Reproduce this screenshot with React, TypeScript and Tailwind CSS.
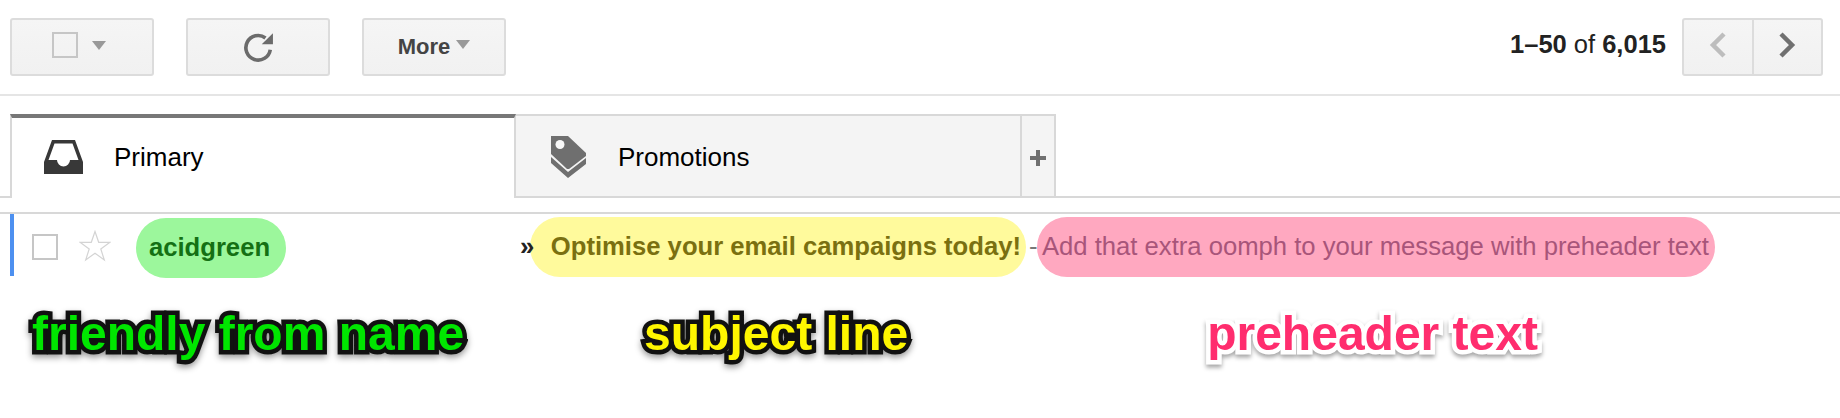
const Caret = () => (
  <svg width="14" height="9" viewBox="0 0 14 9"><path d="M0 0h14L7 9z" fill="#999" /></svg>
);

const btn = "w-[144px] h-[58px] rounded-[3px] border-2 border-[#dcdcdc] bg-gradient-to-b from-[#f5f5f5] to-[#f1f1f1] flex items-center justify-center";

export default function App() {
  return (
    <div className="w-[1840px] h-[418px] overflow-hidden bg-white [font-family:'Liberation_Sans',Arial,sans-serif] text-[25.5px] leading-none">
      <header className="h-[96px] pt-[18px] pl-[10px] pr-[17px] flex items-start gap-[32px] border-b-2 border-[#e5e5e5]">
        <div className={`${btn} gap-[14px] pr-[6px] pb-[4px]`}>
          <span className="w-[26px] h-[26px] border-2 border-[#c6c6c6]" />
          <Caret />
        </div>
        <div className={btn}>
          <svg width="32" height="32" viewBox="0 0 30 30" fill="none">
            <path d="M26.500 17.500a11.500 11.500 0 1 1-4.500-11" stroke="#6b6b6b" strokeWidth="3.400" />
            <path d="M18.500 12.500H29V2z" fill="#6b6b6b" />
          </svg>
        </div>
        <div className={`${btn} gap-[6px]`}>
          <span className="font-bold text-[22px] text-[#444]">More</span>
          <span className="pb-[6px] flex"><Caret /></span>
        </div>
        <div className="ml-auto flex items-center gap-[16px]">
          <span className="text-[#222] pb-[4px]"><b>1–50</b> of <b>6,015</b></span>
          <div className="w-[141px] h-[58px] rounded-[3px] border-2 border-[#dcdcdc] bg-gradient-to-b from-[#f5f5f5] to-[#f1f1f1] flex">
            <div className="flex-1 flex items-center justify-center border-r-2 border-[#dcdcdc] pb-[4px]">
              <svg width="18" height="28" viewBox="0 0 18 28" fill="none"><path d="M15 3 4 14l11 11" stroke="#bdbdbd" strokeWidth="4.500" /></svg>
            </div>
            <div className="flex-1 flex items-center justify-center pb-[4px]">
              <svg width="18" height="28" viewBox="0 0 18 28" fill="none"><path d="M3 3l11 11L3 25" stroke="#707070" strokeWidth="4.500" /></svg>
            </div>
          </div>
        </div>
      </header>

      <nav className="mt-[18px] pl-[10px] flex items-start h-[84px] text-black text-[26px] border-b-2 border-[#d8d8d8]">
        <div className="w-[506px] h-[84px] border-t-4 border-t-[#777] border-x-2 border-x-[#d8d8d8] flex items-center pl-[32px] gap-[31px] pb-[2px] bg-white">
          <svg width="39" height="34" viewBox="0 0 39 34">
            <path fillRule="evenodd" fill="#383838" d="M8 0h23l8 22v12H0V22zM10.500 3.500 4.500 20H13a6.500 6.500 0 0 0 13 0h8.500L28.500 3.500z" />
          </svg>
          <span>Primary</span>
        </div>
        <div className="w-[506px] h-[82px] border-t-2 border-r-2 border-[#d8d8d8] bg-[#f4f4f4] flex items-center pl-[35px] gap-[32px] pt-[2px]">
          <svg width="35" height="42" viewBox="0 0 35 42">
            <path fill="#6f6f6f" d="M0 0h17l18 17v3L18 33h-2L0 18z" />
            <circle cx="9" cy="8.500" r="4.500" fill="#f8f8f8" />
            <path fill="#6f6f6f" d="M0 21 17 36 35 22v6L17 42 0 27z" />
          </svg>
          <span>Promotions</span>
        </div>
        <div className="w-[34px] h-[82px] border-t-2 border-r-2 border-[#d8d8d8] bg-[#f4f4f4] flex items-center justify-center pt-[4px]">
          <svg width="16" height="16" viewBox="0 0 16 16"><path d="M6 0h4v6h6v4h-6v6H6v-6H0V6h6z" fill="#707070" /></svg>
        </div>
      </nav>

      <section className="mt-[14px] border-t-2 border-[#d8d8d8] pl-[10px] h-[66px] flex items-start text-[25.65px]">
        <div className="w-[4px] h-[62px] bg-[#4d90f0] mr-[18px]" />
        <span className="w-[26px] h-[26px] mt-[20px] border-2 border-[#c6c6c6] mr-[21px]" />
        <svg className="mt-[16px] mr-[25px]" width="32" height="32" viewBox="0 0 32 32" fill="none">
          <path d="M16 1.500l3.700 10.800h11.300l-9.200 6.700 3.500 11-9.300-6.800-9.300 6.800 3.500-11L1 12.300h11.300z" stroke="#d4d4d4" strokeWidth="1.200" />
        </svg>
        <span className="w-[150px] h-[60px] mt-[4px] rounded-[30px] bg-[#9cf79c] text-[#147014] font-bold flex items-center justify-center pr-[3px]">acidgreen</span>
        <span className="relative z-10 ml-[234px] mt-[20px] text-[#222] font-bold w-[10px]">»</span>
        <span className="w-[496px] h-[60px] mt-[3px] rounded-[30px] bg-[#fffa9c] text-[#7a7010] font-bold flex items-center justify-end pr-[5px]">Optimise your email campaigns today!</span>
        <span className="ml-[3px] mt-[20px] w-[8px] text-[#777]">-</span>
        <span className="w-[678px] h-[60px] rounded-[30px] mt-[3px] bg-[#ffa8c0] text-[#a8557a] flex items-center justify-end pr-[6px]">Add that extra oomph to your message with preheader text</span>
      </section>

      <footer className="mt-[32px] flex items-start font-bold text-[48px] [-webkit-text-stroke:9px_currentColor] [paint-order:stroke_fill]">
        <span className="ml-[32px] text-[#00e600] [-webkit-text-stroke-color:#111] drop-shadow-[0_3px_3px_rgba(0,0,0,0.4)]">friendly from name</span>
        <span className="ml-[180px] text-[#fff700] [-webkit-text-stroke-color:#111] drop-shadow-[0_3px_3px_rgba(0,0,0,0.4)]">subject line</span>
        <span className="ml-[299px] text-[#ff2d6e] [-webkit-text-stroke-color:#fff] drop-shadow-[0_3px_2px_rgba(0,0,0,0.35)]">preheader text</span>
      </footer>
    </div>
  );
}
